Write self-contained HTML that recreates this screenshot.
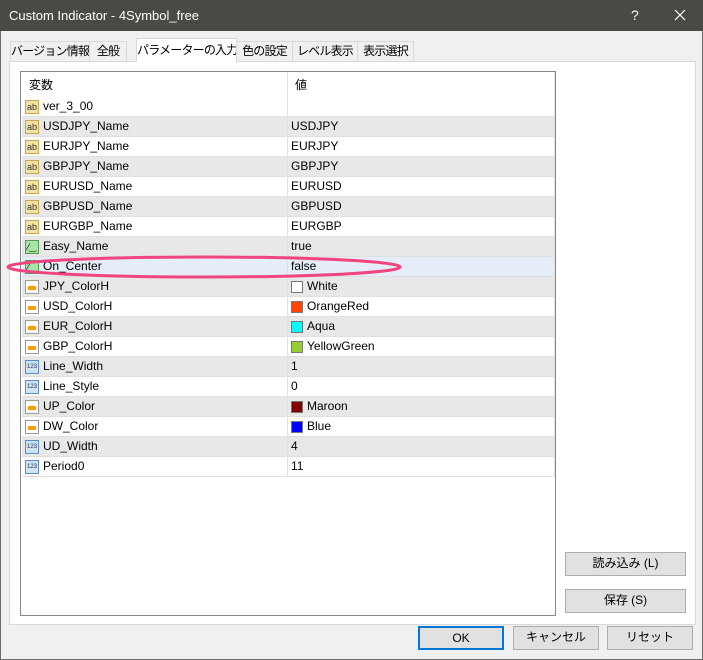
<!DOCTYPE html><html><head><meta charset="utf-8"><style>
*{margin:0;padding:0;box-sizing:border-box}
body{width:703px;height:660px;background:#f0f0f0;font-family:"Liberation Sans","Noto Sans CJK JP",sans-serif;font-size:12px;color:#000;position:relative;overflow:hidden}
.abs{position:absolute}
#title{left:0;top:0;width:703px;height:31px;background:#4b4946;color:#fff;font-size:13px;line-height:31px;padding-left:9px}
#frame{left:0;top:31px;width:703px;height:629px;border:1px solid #6b6b6b;border-top:none}
.tab{top:41px;height:20px;background:#f0f0f0;border:1px solid #d9d9d9;border-bottom:none;line-height:19px;text-align:center;font-size:12px;white-space:nowrap;letter-spacing:-0.8px;overflow:hidden}
.tab.sel{top:38px;height:24px;background:#fff;z-index:2;line-height:22px}
#panel{left:9px;top:61px;width:687px;height:564px;background:#fff;border:1px solid #d9d9d9}
#list{left:20px;top:71px;width:536px;height:545px;border:1px solid #828790;background:#fff;overflow:hidden}
.row{position:absolute;left:1px;width:532px;height:20px;line-height:19px;border-bottom:1px solid #e0e0e0}
.row.g{background:#e8e8e8}
.row.h{background:#e5eef8}
.row .n{position:absolute;left:21px}
.row .v{position:absolute;left:269px}
.row .d{position:absolute;left:265px;top:0;width:1px;height:20px;background:#e0e0e0}
.ic{position:absolute;left:3px;top:3px;width:14px;height:14px;font-size:9px;line-height:12px;text-align:center;border:1px solid}
.ab{background:#f3e3a6;border-color:#c9a64e;color:#333}
.bo{background:#a9e3a9;border-color:#4f9f4f}
.co{background:#fff;border-color:#999}
.co:after{content:"";position:absolute;left:2px;top:5px;width:8px;height:4px;background:#f5a000}
.nu{background:#cfe3f7;border-color:#5d8fc6;font-size:6px;color:#235}
.sw{position:absolute;left:269px;top:4px;width:12px;height:12px;border:1px solid #777}
.btn{background:#e1e1e1;border:1px solid #adadad;text-align:center;line-height:21px;font-size:12px}
</style></head><body>
<div id="title" class="abs">Custom Indicator - 4Symbol_free</div>
<div class="abs" style="left:631px;top:7px;color:#fff;font-size:14px">?</div>
<svg class="abs" style="left:674px;top:9px" width="12" height="12"><path d="M1 1L11 11M11 1L1 11" stroke="#fff" stroke-width="1.2"/></svg>
<div id="frame" class="abs"></div>
<div id="panel" class="abs"></div>
<div class="tab abs" style="left:10px;width:80px">バージョン情報</div>
<div class="tab abs" style="left:89px;width:38px">全般</div>
<div class="tab sel abs" style="left:136px;width:101px">パラメーターの入力</div>
<div class="tab abs" style="left:236px;width:57px">色の設定</div>
<div class="tab abs" style="left:292px;width:66px">レベル表示</div>
<div class="tab abs" style="left:357px;width:57px">表示選択</div>
<div id="list" class="abs">
<div class="row" style="top:0;height:25px;line-height:26px;border:none"><span class="n" style="left:7px">変数</span><span class="v" style="left:273px">値</span><span class="d" style="height:25px"></span></div>
<div style="position:absolute;left:533px;top:0;width:1px;height:405px;background:#e0e0e0"></div>
<div id="rows"></div>
</div>
<svg class="abs" style="left:0;top:250px" width="420" height="34"><ellipse cx="204" cy="17" rx="196" ry="10" fill="none" stroke="#f0457e" stroke-width="3"/></svg>
<div class="btn abs" style="left:565px;top:552px;width:121px;height:24px">読み込み (L)</div>
<div class="btn abs" style="left:565px;top:589px;width:121px;height:24px">保存 (S)</div>
<div class="btn abs" style="left:418px;top:626px;width:86px;height:24px;border:2px solid #0078d7;line-height:20px">OK</div>
<div class="btn abs" style="left:513px;top:626px;width:86px;height:24px">キャンセル</div>
<div class="btn abs" style="left:607px;top:626px;width:86px;height:24px">リセット</div>
<script>
var d=[["ab","ver_3_00",""],["ab","USDJPY_Name","USDJPY"],["ab","EURJPY_Name","EURJPY"],["ab","GBPJPY_Name","GBPJPY"],["ab","EURUSD_Name","EURUSD"],["ab","GBPUSD_Name","GBPUSD"],["ab","EURGBP_Name","EURGBP"],["bo","Easy_Name","true"],["bo","On_Center","false"],["co","JPY_ColorH","White","#fff"],["co","USD_ColorH","OrangeRed","#ff4500"],["co","EUR_ColorH","Aqua","#0ff"],["co","GBP_ColorH","YellowGreen","#9acd32"],["nu","Line_Width","1"],["nu","Line_Style","0"],["co","UP_Color","Maroon","#800000"],["co","DW_Color","Blue","#00f"],["nu","UD_Width","4"],["nu","Period0","11"]];
var h="";d.forEach(function(r,i){var c=i==8?"h":(i%2?"g":"");var t={ab:"ab",bo:"⁄‿",co:"",nu:"123"}[r[0]];
h+='<div class="row '+c+'" style="top:'+(25+20*i)+'px"><span class="ic '+r[0]+'">'+t+'</span><span class="n">'+r[1]+'</span><span class="d"></span>'+(r[3]?'<span class="sw" style="background:'+r[3]+'"></span><span class="v" style="left:285px">'+r[2]+'</span>':'<span class="v">'+r[2]+'</span>')+'</div>'});
document.getElementById("rows").innerHTML=h;
</script>
</body></html>
